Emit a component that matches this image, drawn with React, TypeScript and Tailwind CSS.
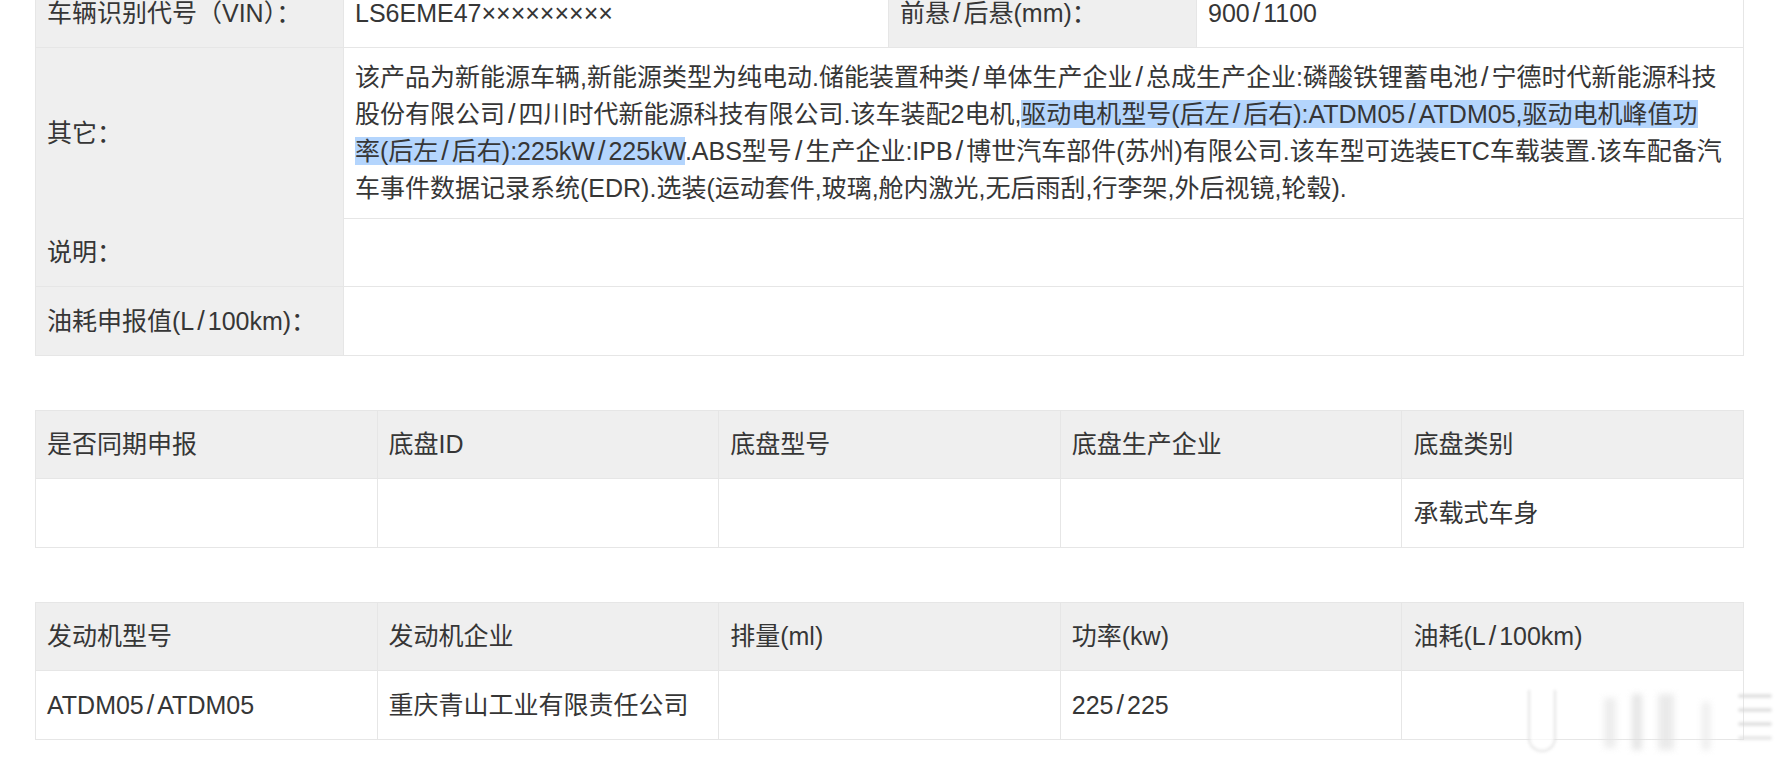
import type { ReactNode } from "react";

// slashes are wider in the source font than in Liberation Sans
function Txt({ s }: { s: string }) {
  const parts = s.split("/");
  return (
    <>
      {parts.map((p, i) => (
        <span key={i}>
          {i > 0 && <span className="mx-[3px] text-[27px]">/</span>}
          {p}
        </span>
      ))}
    </>
  );
}

function Hl({ children }: { children: ReactNode }) {
  return <span className="bg-[#b4d5fd]">{children}</span>;
}

const cell = "flex items-center px-[11px] border-r border-b border-[#e6e6e6] whitespace-nowrap";
const label = `${cell} bg-[#efefef]`;

const chassisHead = ["是否同期申报", "底盘ID", "底盘型号", "底盘生产企业", "底盘类别"];
const chassisRow = ["", "", "", "", "承载式车身"];
const engineHead = ["发动机型号", "发动机企业", "排量(ml)", "功率(kw)", "油耗(L/100km)"];
const engineRow = ["ATDM05/ATDM05", "重庆青山工业有限责任公司", "", "225/225", ""];

function GridTable({ head, row }: { head: string[]; row: string[] }) {
  return (
    <div className="grid grid-cols-5 border-l border-t border-[#e6e6e6]">
      {head.map((h) => (
        <div key={h} className={`${label} h-[68px]`}>
          <Txt s={h} />
        </div>
      ))}
      {row.map((v, i) => (
        <div key={i} className={`${cell} h-[69px] bg-white`}>
          <Txt s={v} />
        </div>
      ))}
    </div>
  );
}

export default function App() {
  return (
    <div className="relative w-[1788px] h-[758px] overflow-hidden bg-white text-[25px] leading-[37px] text-[#363636] font-['Liberation_Sans','Noto_Sans_CJK_SC',sans-serif]">
      <div className="pl-[35px] pr-[44px] -mt-[22px]">
        <div className="border-l border-t border-[#e6e6e6]">
          <div className="grid grid-cols-[308px_545px_308px_1fr] h-[69px]">
            <div className={label}>车辆识别代号（VIN）：</div>
            <div className={cell}>LS6EME47×××××××××</div>
            <div className={label}>
              <Txt s="前悬/后悬(mm)：" />
            </div>
            <div className={cell}>
              <Txt s="900/1100" />
            </div>
          </div>
          <div className="grid grid-cols-[308px_1fr] h-[170px]">
            <div className={label}>其它：</div>
            <div className={`${cell} py-[11px]`}>
              <p>
                <Txt s="该产品为新能源车辆,新能源类型为纯电动.储能装置种类/单体生产企业/总成生产企业:磷酸铁锂蓄电池/宁德时代新能源科技" />
                <br />
                <Txt s="股份有限公司/四川时代新能源科技有限公司.该车装配2电机," />
                <Hl>
                  <Txt s="驱动电机型号(后左/后右):ATDM05/ATDM05,驱动电机峰值功" />
                </Hl>
                <br />
                <Hl>
                  <Txt s="率(后左/后右):225kW/225kW" />
                </Hl>
                <Txt s=".ABS型号/生产企业:IPB/博世汽车部件(苏州)有限公司.该车型可选装ETC车载装置.该车配备汽" />
                <br />
                车事件数据记录系统(EDR).选装(运动套件,玻璃,舱内激光,无后雨刮,行李架,外后视镜,轮毂).
              </p>
            </div>
          </div>
          <div className="grid grid-cols-[308px_1fr] h-[69px]">
            <div className={label}>说明：</div>
            <div className={cell} />
          </div>
          <div className="grid grid-cols-[308px_1fr] h-[69px]">
            <div className={label}>
              <Txt s="油耗申报值(L/100km)：" />
            </div>
            <div className={cell} />
          </div>
        </div>

        <div className="mt-[54px]">
          <GridTable head={chassisHead} row={chassisRow} />
        </div>
        <div className="mt-[54px]">
          <GridTable head={engineHead} row={engineRow} />
        </div>
      </div>

      {/* faint blurred watermark, bottom right */}
      <div className="pointer-events-none absolute left-[1520px] top-[684px] h-[74px] w-[268px] opacity-70">
        <div className="absolute left-[8px] top-[6px] h-[62px] w-[28px] rounded-b-full border-x-2 border-b-2 border-[#d8d8d8] bg-white blur-[1.5px]" />
        <div className="absolute left-[84px] top-[14px] h-[50px] w-[12px] bg-[#e6e6e6] blur-[3px]" />
        <div className="absolute left-[112px] top-[10px] h-[56px] w-[10px] bg-[#dcdcdc] blur-[3px]" />
        <div className="absolute left-[138px] top-[10px] h-[56px] w-[16px] bg-[#e2e2e2] blur-[3px]" />
        <div className="absolute left-[182px] top-[18px] h-[48px] w-[8px] bg-[#e6e6e6] blur-[3px]" />
        <div className="absolute left-[218px] top-[10px] h-[4px] w-[34px] rounded-full bg-[#d6d6d6] blur-[1.5px]" />
        <div className="absolute left-[218px] top-[24px] h-[4px] w-[34px] rounded-full bg-[#d6d6d6] blur-[1.5px]" />
        <div className="absolute left-[218px] top-[38px] h-[4px] w-[34px] rounded-full bg-[#d6d6d6] blur-[1.5px]" />
        <div className="absolute left-[218px] top-[52px] h-[4px] w-[34px] rounded-full bg-[#dedede] blur-[1.5px]" />
      </div>
    </div>
  );
}
